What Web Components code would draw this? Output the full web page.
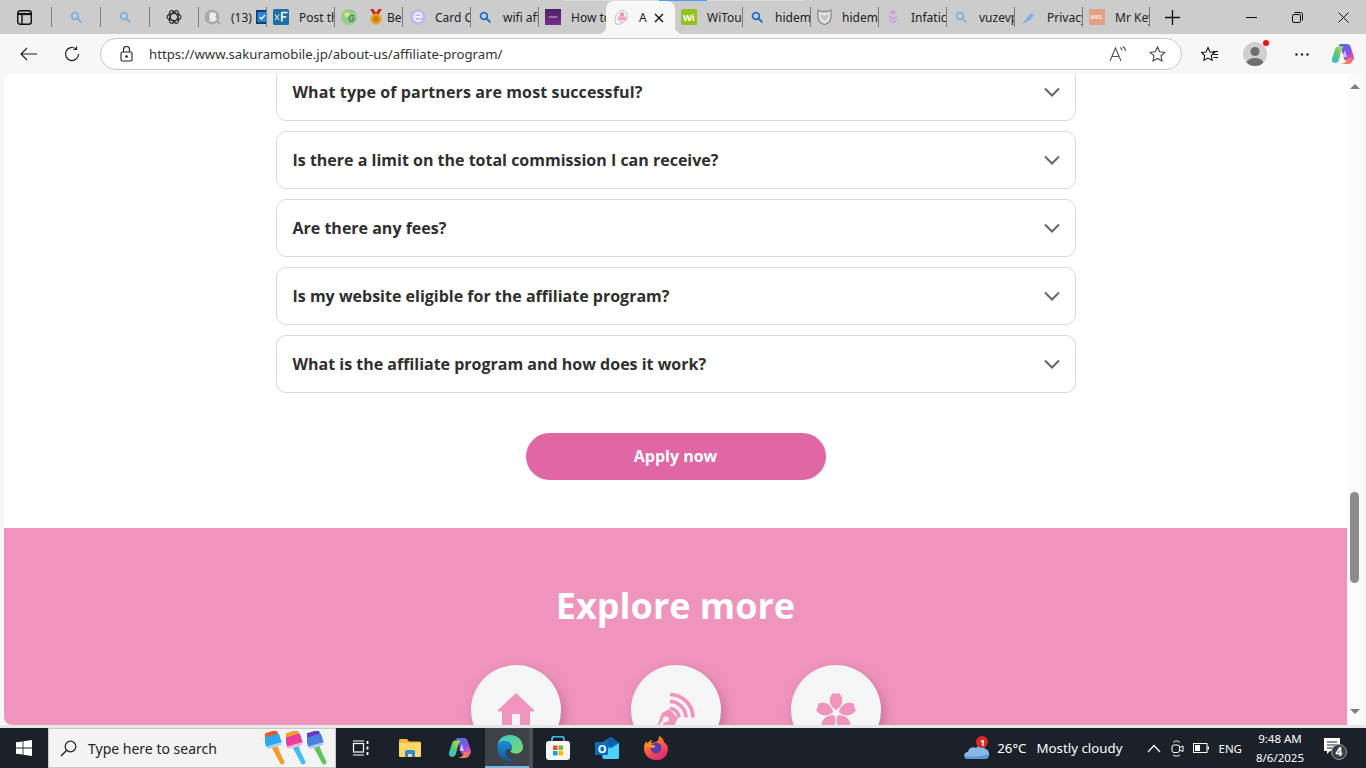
<!DOCTYPE html>
<html lang="en"><head><meta charset="utf-8"><title>Affiliate program</title>
<style>
html,body{margin:0;padding:0;height:768px;overflow:hidden;background:#f7f7f7}
body{font-family:"Open Sans","Noto Sans",sans-serif}
</style></head><body>
<browser-window>
  <tab-strip slot="tabs"></tab-strip>
  <nav-toolbar slot="toolbar"></nav-toolbar>
  <page-view slot="page">
    <faq-item style="letter-spacing:.12px">What type of partners are most successful?</faq-item>
    <faq-item>Is there a limit on the total commission I can receive?</faq-item>
    <faq-item>Are there any fees?</faq-item>
    <faq-item>Is my website eligible for the affiliate program?</faq-item>
    <faq-item>What is the affiliate program and how does it work?</faq-item>
    <apply-button>Apply now</apply-button>
    <explore-band slot="band">Explore more</explore-band>
  </page-view>
  <task-bar slot="taskbar"></task-bar>
</browser-window>
<script>
const mag=c=>`<svg width="16" height="16" viewBox="-2 -2 20 20"><circle cx="6.7" cy="6.7" r="4.200" fill="none" stroke="${c}" stroke-width="2.200"/><path d="M9.800 9.800l4.200 4.200" stroke="${c}" stroke-width="2.500" stroke-linecap="round"/></svg>`;
const brush=(a,b,c,d)=>`<svg width="21" height="35" viewBox="0 0 21 35"><g transform="rotate(-17 10 17)"><rect x="3" y="0" width="14" height="5" rx="1" fill="${a}"/><rect x="2" y="4" width="16" height="10" rx="1" fill="${b}"/><rect x="3" y="13" width="14" height="3" fill="${c}"/><path d="M7 16h6l.5 7 1.500 10c-.4 2.500-4 2.500-4.500 0L8.500 23z" fill="${d}"/></g></svg>`;
const PETAL='M20 18c-5-3-7-8-6-12 1-3 2-4 3-5l2 1 1-1 1 1 2-1c1 1 2 2 3 5 1 4-1 9-6 12z';
const COPILOT=`<svg width="22" height="22" viewBox="0 0 22 22"><defs><linearGradient id="c1" x1="0" y1="1" x2="1" y2="0"><stop offset="0" stop-color="#2fb5e8"/><stop offset=".55" stop-color="#5ecf6a"/><stop offset="1" stop-color="#f7d046"/></linearGradient><linearGradient id="c2" x1="0" y1="0" x2="1" y2="1"><stop offset="0" stop-color="#2a7de8"/><stop offset=".55" stop-color="#8d4fe6"/><stop offset="1" stop-color="#ee5f9c"/></linearGradient><linearGradient id="c3" x1="0" y1="0" x2="1" y2="0"><stop offset="0" stop-color="#f5a623"/><stop offset="1" stop-color="#ef5f8a"/></linearGradient></defs><path d="M9 1h6c2 0 3 1 3.500 2.500L22 14c.5 2-1 4-3 4h-4c-1.500 0-2.500-1-3-2.500L9 5C8.500 3.500 8 3 6.500 3 7 1.500 8 1 9 1z" fill="url(#c2)"/><path d="M6 3.500h5.500c-1.200 1.500-2 3.500-2.500 5.500l-2 7.500c-.5 2-2 3.500-4 3.500-2.500 0-3.500-2-3-4.500L3 6.500C3.500 4.800 4.500 3.500 6 3.500z" fill="url(#c1)"/><path d="M9 21h7c2.500 0 4-1.500 5-4 .5-1.500-.5-2.500-2-2.500h-1.500c-1.500 0-2 .8-2.500 2-.7 2.200-2.500 3.800-6 4.500z" fill="url(#c3)"/><path d="M13 7l2 7h-3.500c-1 0-1.200-.8-1-1.500z" fill="#f6e6f5" opacity=".7"/></svg>`;
const ICONS={
 search1:mag('#7fb0d9'),
 search2:mag('#1a73c8'),
 gpt:`<svg width="16" height="16" viewBox="0 0 16 16" fill="none" stroke="#2a2a2a" stroke-width="1.100"><ellipse cx="8" cy="8" rx="7" ry="3.600"/><ellipse cx="8" cy="8" rx="7" ry="3.600" transform="rotate(60 8 8)"/><ellipse cx="8" cy="8" rx="7" ry="3.600" transform="rotate(120 8 8)"/></svg>`,
 b:`<svg width="17" height="16" viewBox="0 0 17 16"><circle cx="8" cy="8" r="7.500" fill="#a9a9a9"/><path d="M13 12l3 3" stroke="#a9a9a9" stroke-width="2"/><path d="M5.500 3.500h3.800c2 0 2.900 1 2.900 2.200 0 1-.6 1.700-1.400 2 1.100.3 1.800 1.100 1.800 2.300 0 1.600-1.200 2.500-3.200 2.500H5.500z" fill="#ececec"/></svg>`,
 todo:`<svg width="11" height="14" viewBox="0 0 11 14"><rect width="11" height="14" fill="#143a6b"/><rect x="1.500" y="2" width="9" height="10" fill="#1f86e6"/><path d="M3.500 7l2 2 3.500-4" fill="none" stroke="#fff" stroke-width="1.300"/></svg>`,
 xf:`<svg width="16" height="16" viewBox="0 0 16 16"><rect width="16" height="16" rx="1.500" fill="#1d6fa5"/><path d="M2 5.500l4 5.500M6 5.500l-4 5.500" stroke="#cfe6f6" stroke-width="1.200"/><path d="M8.500 3.500h6M8.800 3.500v9M8.800 8h4.500" stroke="#fff" stroke-width="1.700" fill="none"/></svg>`,
 g:`<svg width="16" height="16" viewBox="0 0 16 16"><circle cx="8" cy="8" r="8" fill="#8ed08e"/><circle cx="6" cy="5.500" r="2.500" fill="#e6e08a"/><path d="M13 7.500c-1-1.500-4.500-1.500-5 1.500s3.500 4.500 5 2V9.500h-2.500" fill="none" stroke="#5b7a5b" stroke-width="1.300"/></svg>`,
 medal:`<svg width="14" height="16" viewBox="0 0 14 16"><path d="M1 0l5 8h2l5-8H9.500L7 4 4.500 0z" fill="#c9281f"/><circle cx="7" cy="10" r="5.500" fill="#e8a21d"/><circle cx="7" cy="10" r="3" fill="#c77f10"/></svg>`,
 e:`<svg width="16" height="16" viewBox="0 0 16 16"><circle cx="8" cy="8" r="8" fill="#c3b8ec"/><path d="M4.300 8h7.200c0-2.300-1.500-4-3.600-4S4.200 5.800 4.200 8s1.600 4 3.900 4c1.400 0 2.400-.5 3.200-1.500" fill="none" stroke="#f3f0fb" stroke-width="1.800"/></svg>`,
 purple:`<svg width="16" height="16" viewBox="0 0 16 16"><defs><linearGradient id="p" x1="0" y1="0" x2="0" y2="1"><stop offset="0" stop-color="#4a2264"/><stop offset="1" stop-color="#772e8f"/></linearGradient></defs><rect width="16" height="16" fill="url(#p)"/><rect x="3.500" y="7.500" width="9" height="1" fill="#cdb6d8"/></svg>`,
 sakura:`<svg width="16" height="18" viewBox="0 0 16 18" fill="none"><path d="M3 15C.5 10 3 3 9 1.500c4 0 6 4 5 8-1 3-6 7-11 5.500z" stroke="#999" stroke-width=".9" stroke-dasharray="1.500 1"/><circle cx="9" cy="5.500" r="2.300" fill="#ef94bd"/><circle cx="7" cy="9.500" r="2.400" fill="#f2a9cb"/><circle cx="11" cy="9.500" r="2" fill="#ef94bd"/><circle cx="8" cy="13" r="1.500" fill="#f6c3da"/></svg>`,
 wi:`<svg width="16" height="16" viewBox="0 0 16 16"><rect width="16" height="16" rx="1.500" fill="#95c11f"/><text x="1.700" y="12" font-family="Open Sans" font-weight="700" font-size="9.500" fill="#fff">Wi</text></svg>`,
 shield:`<svg width="15" height="16" viewBox="0 0 15 16"><path d="M1 1l3 1.500h7L14 1v7c0 4-3 6.500-6.500 7.500C4 14.500 1 12 1 8z" fill="#e4e4e4" stroke="#8b8b8b" stroke-width="1.300"/><path d="M4 5l3.500 2L11 5v4L7.500 12 4 9z" fill="#c4c4c4"/></svg>`,
 layers:`<svg width="16" height="16" viewBox="0 0 16 16"><path d="M4 3.200L8 .5l4 2.700L8 6z" fill="#dd9fd6"/><path d="M4 6.500L8 9l4-2.500v1.800L8 11 4 8.300z" fill="#c59be0"/><path d="M4 9.700l4 2.500 4-2.500v1.800l-4 2.700-4-2.700z" fill="#b9a6e8"/><path d="M5 13l3 2 3-2v1l-3 2-3-2z" fill="#c7bcef"/></svg>`,
 bird:`<svg width="16" height="16" viewBox="0 0 16 16"><path d="M1 15l4-5 5-6 2.500 2-3 5-4 2z" fill="#86aee8"/><path d="M10 1.500l1.500 1M12.500 3.500l1.500 1M13 1l1 1" stroke="#a9c6ef" stroke-width="1.200"/></svg>`,
 mks:`<svg width="16" height="16" viewBox="0 0 16 16"><rect width="16" height="16" fill="#e0a286"/><text x="1" y="10" font-family="Open Sans" font-weight="700" font-size="5.500" fill="#f7e6dc">MKS</text></svg>`,
 house:`<svg width="38" height="44" viewBox="0 0 38 44"><path d="M19 1L37 18c.6.800 0 1.500-1 1.500h-3V44H5V19.500H2c-1 0-1.600-.7-1-1.500z" fill="#ef94bd"/><rect x="15" y="22" width="8" height="22" fill="#f5f5f5"/></svg>`,
 pen:`<svg width="40" height="44" viewBox="0 0 40 44" fill="none"><g stroke="#ef94bd" stroke-width="3.600"><path d="M14 2.500c12 0 23 10 23 23"/><path d="M14 9.500c8.500 0 16 7.500 16 16"/><path d="M14 16.500c4.500 0 9 4.500 9 9"/></g><path d="M13 17l9 9-4 8-16 7-2-2 9-9a3 3 0 1 0-2-2L0 37 6 21z" fill="#ef94bd"/></svg>`,
 flower:`<svg width="40" height="44" viewBox="0 0 40 44" fill="#ef94bd"><path d="${PETAL}"/><path d="${PETAL}" transform="rotate(72 20 21)"/><path d="${PETAL}" transform="rotate(144 20 21)"/><path d="${PETAL}" transform="rotate(216 20 21)"/><path d="${PETAL}" transform="rotate(288 20 21)"/></svg>`,
 win:`<svg width="16" height="16" viewBox="0 0 16 16" fill="#fff"><path d="M0 2.300l6.600-.9v6.200H0zM7.400 1.300L16 0v7.600H7.400zM0 8.400h6.600v6.200L0 13.700zM7.400 8.400H16V16l-8.600-1.200z"/></svg>`,
 lens:`<svg width="17" height="17" viewBox="0 0 17 17" fill="none" stroke="#222" stroke-width="1.200"><circle cx="10.500" cy="6.500" r="5.300"/><path d="M6.500 10.500L1 16" stroke-width="1.500"/></svg>`,
 taskview:`<svg width="18" height="16" viewBox="0 0 18 16" fill="none" stroke="#fff" stroke-width="1.200"><rect x="1.500" y="3.500" width="10" height="8.500"/><path d="M1 1h11M1 15h11"/><path d="M15.500 1v3M15.500 6.500v3M15.500 12v3" stroke-width="1.800"/></svg>`,
 folder:`<svg width="22" height="18" viewBox="0 0 22 18"><path d="M0 1.500C0 .7.700 0 1.500 0H8l2 2.500h10.500c.8 0 1.500.7 1.500 1.500v12.500c0 .8-.7 1.500-1.500 1.500h-19C.7 18 0 17.300 0 16.500z" fill="#f2b938"/><path d="M0 4h22v12.500c0 .8-.7 1.500-1.500 1.500h-19C.7 18 0 17.300 0 16.500z" fill="#fcd76a"/><path d="M6 18v-5c0-1 .7-2 2-2h6c1.300 0 2 1 2 2v5h-3v-3H9v3z" fill="#2f88d4"/></svg>`,
 copilot:COPILOT,
 edge:`<svg width="26" height="26" viewBox="0 0 26 26"><defs><linearGradient id="e1" x1="0" y1="0" x2="1" y2="1"><stop offset="0" stop-color="#37c6d0"/><stop offset="1" stop-color="#7fdc6a"/></linearGradient><linearGradient id="e2" x1="0" y1="0" x2="0" y2="1"><stop offset="0" stop-color="#1d8fd6"/><stop offset="1" stop-color="#0c59a4"/></linearGradient></defs><path d="M13 0c7.500 0 13 5.500 13 12 0 4-3 6.500-7 6.500-3 0-5.500-1-5.500-2.500 0-.8 1.500-1 1.500-3.500 0-3.500-3.500-6.500-7.500-6.500C4 6 1.500 8 .5 10 1.500 4 6.500 0 13 0z" fill="url(#e1)"/><path d="M.5 10C2 7.500 4.500 6 7.500 6c4 0 7.500 3 7.500 6.500 0 1-.5 1.500-1 2-2.500-1-5-.5-5.500 2.500-.5 4 4 8.500 9.500 7.500-1.500.8-3.200 1.500-5 1.500C5.500 26 0 20 .5 10z" fill="url(#e2)"/></svg>`,
 store:`<svg width="24" height="24" viewBox="0 0 24 24"><path d="M6 6V3c0-1.500 1-2.500 2.500-2.500h7C17 .5 18 1.500 18 3v3" fill="none" stroke="#3fb6ea" stroke-width="1.800"/><rect y="5" width="24" height="19" rx="3" fill="#f6f6f6"/><rect x="7" y="9.500" width="4.500" height="4.500" fill="#e8542a"/><rect x="12.500" y="9.500" width="4.500" height="4.500" fill="#7cb82f"/><rect x="7" y="15" width="4.500" height="4.500" fill="#18a0ee"/><rect x="12.500" y="15" width="4.500" height="4.500" fill="#ffb900"/></svg>`,
 outlook:`<svg width="24" height="22" viewBox="0 0 24 22"><path d="M8 5l8-5 8 6v14c0 1-.8 2-2 2H9c-1 0-2-1-2-2z" fill="#28a8ea"/><path d="M24 6L8 15v5c0 1 1 2 2 2h12c1.200 0 2-1 2-2z" fill="#50d9ff" opacity=".85"/><path d="M16 0l8 6-8 5-8-5z" fill="#0a5fb0"/><rect y="5" width="13" height="13" rx="1" fill="#0f6cbd"/><text x="2.700" y="15.500" font-family="Open Sans" font-weight="700" font-size="11" fill="#fff">O</text></svg>`,
 firefox:`<svg width="24" height="24" viewBox="0 0 24 24"><defs><linearGradient id="f1" x1="0" y1="0" x2=".6" y2="1"><stop offset="0" stop-color="#ffcc33"/><stop offset=".45" stop-color="#ff6a2b"/><stop offset="1" stop-color="#e0267a"/></linearGradient></defs><path d="M12 24C5 24 0 19 0 12c0-3 1-5 2.500-7 0 1 .5 2 1 2.500C5 5 7 4 8.500 4c-1 1-1.500 2-1.500 3 2-.5 5-.5 7-2.500.8-1.500 1-3 1-4.500 4 2 5 4.500 5 6 2.500 2 4 3.500 4 6.500 0 7-5 12-12 12z" fill="url(#f1)"/><circle cx="12" cy="12" r="5.500" fill="#5b3bb5"/><path d="M3 9h7l1.500 2c-2 1.500-5 1-8.500-2z" fill="#ff9a2e"/></svg>`,
 cloud:`<svg width="26" height="26" viewBox="0 0 26 26"><path d="M4 24c-5 0-5-7 0-7 .5-4 5-6 8-4 2-3 8-3 9 1 5 0 6 10 0 10z" fill="#8ab8e8"/><path d="M4 24c-3 0-4-2-3.500-3.500C6 22 16 22 24 19c1 2 0 5-3 5z" fill="#5f97d6"/><circle cx="18" cy="7" r="6" fill="#d92b22"/><text x="15.900" y="10.500" font-family="Open Sans" font-weight="700" font-size="9" fill="#fff">1</text></svg>`,
 chevup:`<svg width="14" height="9" viewBox="0 0 14 9" fill="none" stroke="#fff" stroke-width="1.200"><path d="M1 8l6-6.500L13 8"/></svg>`,
 meet:`<svg width="13" height="17" viewBox="0 0 13 17" fill="none" stroke="#fff" stroke-width="1"><rect x="1" y="5" width="7.500" height="7.500" rx="2"/><path d="M8.500 7.500L12 6v5.500l-3.500-1.500M2 2.500c2-2 5-2 7 0M2 15c2 1.500 5 1.500 7 0"/></svg>`,
 batt:`<svg width="16" height="10" viewBox="0 0 16 10" fill="none"><rect x=".5" y=".5" width="13.500" height="9" stroke="#fff"/><rect x="2" y="2" width="5" height="6" fill="#fff"/><rect x="14.500" y="3.500" width="1.500" height="3" fill="#fff"/></svg>`,
 notif:`<svg width="26" height="26" viewBox="0 0 26 26"><path d="M1 3h16v13H7l-3 3v-3H1z" fill="#fff"/><path d="M4 7h10M4 10h10M4 13h10" stroke="#222" stroke-width="1"/><circle cx="16" cy="17" r="7.500" fill="#3a3f46" stroke="#999" stroke-width="1"/></svg>`,
};
class Base extends HTMLElement{
  constructor(){super();this.attachShadow({mode:'open'})}
  connectedCallback(){this.shadowRoot.innerHTML=this.render()}
}
customElements.define('x-icon',class extends Base{
  render(){return `<style>:host{display:inline-flex;flex:none;align-items:center;justify-content:center}svg{display:block}</style>${ICONS[this.getAttribute('name')]}`}
});
customElements.define('browser-window',class extends Base{
  render(){return `<style>:host{display:flex;flex-direction:column;height:768px;width:1366px;background:#f7f7f7}
  .gap{height:3px;flex:none;background:#e6e6e6}</style>
  <slot name="tabs"></slot><slot name="toolbar"></slot><slot name="page"></slot><div class="gap"></div><slot name="taskbar"></slot>`}
});
customElements.define('browser-tab',class extends Base{
  render(){const w=this.getAttribute('w'),ic=(this.getAttribute('icons')||'').split(' ').filter(Boolean);
    const gap=this.getAttribute('gap')||10,pad=this.getAttribute('pad')||6,t=this.getAttribute('text')||'';
    const end=this.getAttribute('end');
    return `<style>:host{display:flex;flex:none;width:${w}px;height:34px;position:relative;align-items:center;box-sizing:border-box;padding-left:${pad}px;color:#222;font:12px "Noto Sans","Open Sans",sans-serif}
    :host([sep])::after{content:"";position:absolute;right:0;top:7px;height:20px;width:1px;background:#7c7c7c}
    .i{display:flex;align-items:center;gap:${this.getAttribute('igap')||12}px;flex:none}
    .t{margin-left:${gap}px;white-space:nowrap;overflow:hidden;flex:1;min-width:0}
    .e{position:absolute;right:0;top:10px}
    </style><span class="i">${ic.map(n=>`<x-icon name="${n}"></x-icon>`).join('')}</span>${t?`<span class="t">${t}</span>`:''}${end?`<x-icon class="e" name="${end}"></x-icon>`:''}`}
});
customElements.define('active-tab',class extends Base{
  render(){return `<style>:host{display:flex;flex:none;width:69px;height:33px;margin-top:1px;background:#f7f7f7;border-radius:8px 8px 0 0;position:relative;align-items:center;box-sizing:border-box;padding-left:7px;color:#222;font:12px "Noto Sans","Open Sans",sans-serif}
  :host::before,:host::after{content:"";position:absolute;bottom:0;width:8px;height:8px}
  :host::before{left:-8px;background:radial-gradient(circle at 0 0,transparent 8px,#f7f7f7 8.500px)}
  :host::after{right:-8px;background:radial-gradient(circle at 100% 0,transparent 8px,#f7f7f7 8.500px)}
  .t{margin-left:10px;width:14px;overflow:hidden}
  svg{margin-left:1px;display:block}</style>
  <x-icon name="sakura"></x-icon><span class="t">A</span><svg width="10" height="10" viewBox="0 0 10 10" stroke="#111" stroke-width="1.400"><path d="M1 1l8 8M9 1l-8 8"/></svg>`}
});
customElements.define('tab-strip',class extends Base{
  render(){return `<style>:host{display:flex;flex:none;height:34px;background:#cccccc;position:relative;align-items:flex-start;color:#222}
  .menu{width:52px;height:34px;flex:none;display:flex;align-items:center;box-sizing:border-box;padding-left:17px;position:relative}
  .menu::after{content:"";position:absolute;right:0;top:7px;height:20px;width:1px;background:#7c7c7c}
  .top{position:absolute;top:0;left:563px;width:240px;height:1px;background:#dcdcdc}
  .top i{display:block;margin-left:96px;width:48px;height:1px;background:#4a9fea}
  .plus{flex:none;width:45px;display:flex;justify-content:center;align-items:center;height:34px}
  .ctl{margin-left:33px;display:flex}
  .ctl span{width:46px;height:34px;display:flex;align-items:center;justify-content:center}
  </style><div class="top"><i></i></div>
  <div class="menu"><svg width="15" height="15" viewBox="0 0 15 15" fill="none" stroke="#111" stroke-width="1.400"><rect x=".7" y=".7" width="13.600" height="13.600" rx="2.500"/><path d="M.7 4h13.600" stroke-width="2.200"/><path d="M5 4v10"/></svg></div>
  <browser-tab w="49" sep pad="16" icons="search1"></browser-tab>
  <browser-tab w="49" sep pad="16" icons="search1"></browser-tab>
  <browser-tab w="49" sep pad="16" icons="gpt"></browser-tab>
  <browser-tab w="68" sep pad="5" gap="10" icons="b" text="(13)" end="todo"></browser-tab>
  <browser-tab w="68" sep icons="xf" text="Post th"></browser-tab>
  <browser-tab w="68" sep icons="g medal" igap="12" gap="4" text="Be"></browser-tab>
  <browser-tab w="68" sep pad="7" icons="e" gap="9" text="Card C"></browser-tab>
  <browser-tab w="68" sep icons="search2" text="wifi aff"></browser-tab>
  <browser-tab w="67" pad="6" icons="purple" text="How to"></browser-tab>
  <active-tab></active-tab>
  <browser-tab w="68" sep pad="6" icons="wi" text="WiTou"></browser-tab>
  <browser-tab w="68" sep icons="search2" text="hidem"></browser-tab>
  <browser-tab w="68" sep icons="shield" text="hidem"></browser-tab>
  <browser-tab w="68" sep icons="layers" text="Infatic"></browser-tab>
  <browser-tab w="68" sep icons="search1" text="vuzevp"></browser-tab>
  <browser-tab w="68" sep icons="bird" text="Privacy"></browser-tab>
  <browser-tab w="67" sep icons="mks" text="Mr Key"></browser-tab>
  <span class="plus"><svg width="15" height="15" viewBox="0 0 15 15" stroke="#111" stroke-width="1.300"><path d="M7.500 0v15M0 7.500h15"/></svg></span>
  <div class="ctl">
   <span><svg width="11" height="1" viewBox="0 0 11 1"><path d="M0 .5h11" stroke="#111"/></svg></span>
   <span><svg width="11" height="11" viewBox="0 0 11 11" fill="none" stroke="#111"><rect x=".5" y="2.500" width="8" height="8" rx="1.500"/><path d="M2.500.5h6a2 2 0 0 1 2 2v6"/></svg></span>
   <span><svg width="11" height="11" viewBox="0 0 11 11" stroke="#111"><path d="M.5.500l10 10M10.500.500l-10 10"/></svg></span>
  </div>`}
});
customElements.define('nav-toolbar',class extends Base{
  render(){return `<style>:host{display:flex;flex:none;height:40px;background:#f7f7f7;align-items:center;box-sizing:border-box;padding:0 0 0 20px;position:relative}
  .b{display:flex;flex:none;justify-content:center;align-items:center}
  .addr{width:1082px;height:32px;box-sizing:border-box;background:#fff;border:1px solid #c8c8c8;border-radius:16px;display:flex;align-items:center;padding-left:19px;flex:none}
  .url{margin-left:16px;font:13.200px "Noto Sans","Open Sans",sans-serif;color:#333;flex:1;white-space:nowrap}
  .av{display:block;border-radius:50%}
  .wrap{position:relative;display:block}
  .dot{position:absolute;right:-2px;top:-2px;width:6px;height:6px;border-radius:50%;background:#e11;}
  </style>
  <span class="b"><svg width="18" height="14" viewBox="0 0 18 14" fill="none" stroke="#222" stroke-width="1.200"><path d="M17 7H1M7 1L1 7l6 6"/></svg></span>
  <span class="b" style="margin-left:26px"><svg width="16" height="16" viewBox="0 0 16 16" fill="none" stroke="#222" stroke-width="1.200"><path d="M14.500 8A6.500 6.500 0 1 1 12 2.900"/><path d="M12.500.500v3h-3" /></svg></span>
  <div class="addr" style="margin-left:20px">
   <svg width="13" height="16" viewBox="0 0 13 16" fill="none" stroke="#222" stroke-width="1.100"><rect x="1" y="6" width="11" height="9" rx="1.500"/><path d="M3.500 6V3.500a3 3 0 0 1 6 0V6"/><circle cx="6.500" cy="10.500" r=".8" fill="#222"/></svg>
   <span class="url">https://www.sakuramobile.jp/about-us/affiliate-program/</span>
   <span class="b" style="margin-right:22px"><svg width="18" height="16" viewBox="0 0 18 16" fill="none" stroke="#555" stroke-width="1.100"><path d="M1 15L6.500 2 12 15M3 10.500h7"/><path d="M11 1.500c1.500 .5 2 1.500 2 3M13.500.500c2 1 3 2.500 3 4.500"/></svg></span>
   <span class="b" style="margin-right:15px"><svg width="17" height="16" viewBox="0 0 17 16" fill="none" stroke="#444" stroke-width="1.100"><path d="M8.500 1l2.200 4.700 5.100.6-3.800 3.500 1 5.100-4.500-2.500-4.500 2.500 1-5.100L1.200 6.300l5.100-.6z"/></svg></span>
  </div>
  <span class="b" style="margin-left:19px"><svg width="18" height="16" viewBox="0 0 18 16" fill="none" stroke="#111" stroke-width="1.100"><path d="M7 1.500L9 6l4.500.5-3.200 3 .8 4.700L7 12l-4.100 2.200.8-4.700-3.200-3L5 6z"/><path d="M12 5.500h5M12.500 8.500h4.500M12.500 11.500h4.500"/></svg></span>
  <span class="b wrap" style="margin-left:24px"><svg class="av" width="24" height="24" viewBox="0 0 24 24"><rect width="24" height="24" fill="#cfcfcf"/><circle cx="12" cy="9.500" r="4.500" fill="#6e6e6e"/><path d="M3 24c0-6 4-8 9-8s9 2 9 8z" fill="#6e6e6e"/></svg><span class="dot"></span></span>
  <span class="b" style="margin-left:28px"><svg width="14" height="3" viewBox="0 0 14 3" fill="#222"><circle cx="1.500" cy="1.500" r="1.200"/><circle cx="7" cy="1.500" r="1.200"/><circle cx="12.500" cy="1.500" r="1.200"/></svg></span>
  <x-icon name="copilot" style="margin-left:23px"></x-icon>`}
});
customElements.define('page-view',class extends Base{
  render(){return `<style>:host{display:flex;flex:none;height:651px;width:1358px;margin-left:4px;background:#fff;border-radius:8px;overflow:hidden}
  .scroll{width:1343px;flex:none;overflow:hidden;height:651px}
  .list{margin-top:-11px;display:flex;flex-direction:column;align-items:center;gap:10px}
  .cta{display:flex;justify-content:center;margin:40px 0 48px}
  .bar{flex:none;width:15px;background:#fbfbfb;display:flex;flex-direction:column;align-items:center;box-sizing:border-box;padding-top:10px;height:651px}
  .thumb{width:9px;height:91px;border-radius:5px;background:#8c8c8c;margin-top:403px}
  .up{width:0;height:0;border:5px solid transparent;border-top:0;border-bottom:5px solid #7d7d7d}
  .down{width:0;height:0;border:5px solid transparent;border-bottom:0;border-top:5px solid #7d7d7d;margin-top:126px}
  </style>
  <div class="scroll"><div class="list"><slot></slot></div><div class="cta"><slot name="cta"></slot></div><slot name="band"></slot></div>
  <div class="bar"><div class="up"></div><div class="thumb"></div><div class="down"></div></div>`}
  connectedCallback(){super.connectedCallback();const a=this.querySelector('apply-button');if(a)a.slot='cta'}
});
customElements.define('faq-item',class extends Base{
  render(){return `<style>:host{display:flex;box-sizing:border-box;width:800px;height:58px;border:1px solid #d9d9d9;border-radius:10px;background:#fff;align-items:center;justify-content:space-between;padding:0 15px 0 16px;font:700 16px "Open Sans",sans-serif;color:#2f2f2f}</style>
  <slot></slot><svg width="16" height="10" viewBox="0 0 16 10" fill="none" stroke="#666" stroke-width="2"><path d="M1 1.500l7 7 7-7"/></svg>`}
});
customElements.define('apply-button',class extends Base{
  render(){return `<style>:host{display:flex;width:300px;height:47px;box-sizing:border-box;padding-bottom:2px;border-radius:24px;background:#e066a4;color:#fff;align-items:center;justify-content:center;font:700 16px "Open Sans",sans-serif}</style><slot></slot>`}
});
customElements.define('explore-band',class extends Base{
  render(){return `<style>:host{display:block;background:#ef94bd;height:240px;box-sizing:border-box;padding-top:53px;color:#fff}
  h2{margin:0;font:700 36px/50px "Open Sans",sans-serif;text-align:center}
  .row{display:flex;justify-content:center;gap:70px;margin-top:34px}
  .c{width:90px;height:90px;border-radius:50%;background:#f5f5f5;box-shadow:3px 5px 12px rgba(120,50,90,.35);display:flex;justify-content:center;padding-top:27px;box-sizing:border-box}
  </style><h2><slot></slot></h2><div class="row">
  <div class="c"><x-icon name="house" style="align-items:flex-start"></x-icon></div>
  <div class="c"><x-icon name="pen" style="align-items:flex-start"></x-icon></div>
  <div class="c"><x-icon name="flower" style="align-items:flex-start"></x-icon></div></div>`}
});
customElements.define('task-bar',class extends Base{
  render(){return `<style>:host{display:flex;flex:none;height:40px;background:#1b2129;align-items:center;color:#fff;font:13px "Noto Sans","Open Sans",sans-serif;position:relative}
  .start{width:48px;display:flex;justify-content:center;flex:none}
  .search{width:288px;height:40px;box-sizing:border-box;flex:none;background:#f3f3f3;border:1px solid #c8c8c8;display:flex;align-items:center;padding-left:11px;color:#222;font-size:14px}
  .search span{margin-left:11px;flex:1;white-space:nowrap}
  .br{display:flex;margin-right:7px}
  .br svg{display:block}
  .app{height:40px;flex:none;display:flex;align-items:center;justify-content:center;box-sizing:border-box}
  .on{background:#3e434a;border-bottom:2px solid #76b9ed;position:relative;padding:2px 0 0 2px}
  .on::after{content:"";position:absolute;right:0;top:0;bottom:-2px;width:4px;background:#4a4f56}
  .sp{flex:1}
  .w{margin-left:7px;white-space:nowrap;font-size:13.300px}
  .clock{width:60px;text-align:center;line-height:19px;font-size:11.500px;flex:none;margin-left:8px}
  .n{position:relative;width:26px;height:26px;margin:0 17px 0 13px;flex:none}
  .n b{position:absolute;left:9px;top:9px;width:14px;text-align:center;font:700 12px/16px "Open Sans",sans-serif}
  </style>
  <div class="start"><x-icon name="win"></x-icon></div>
  <div class="search"><x-icon name="lens"></x-icon><span>Type here to search</span><div class="br">
    ${brush('#e25a2a','#2fa7ee','#9cd2f5','#f59b2e')}${brush('#f0a12a','#e8409a','#f7b3d6','#3fc0ee')}${brush('#6a35c2','#4a7fe0','#b3c5f5','#5ec65e')}</div></div>
  <div class="app" style="width:49px"><x-icon name="taskview"></x-icon></div>
  <div class="app" style="width:50px"><x-icon name="folder"></x-icon></div>
  <div class="app" style="width:50px"><x-icon name="copilot"></x-icon></div>
  <div class="app on" style="width:48px"><x-icon name="edge"></x-icon></div>
  <div class="app" style="width:49px"><x-icon name="store"></x-icon></div>
  <div class="app" style="width:50px"><x-icon name="outlook"></x-icon></div>
  <div class="app" style="width:48px"><x-icon name="firefox"></x-icon></div>
  <div class="sp"></div>
  <x-icon name="cloud"></x-icon><span class="w">26°C</span><span class="w" style="margin-left:10px">Mostly cloudy</span>
  <x-icon name="chevup" style="margin-left:25px"></x-icon>
  <x-icon name="meet" style="margin-left:10px"></x-icon>
  <x-icon name="batt" style="margin-left:9px"></x-icon>
  <span style="margin-left:9px;font-size:11.500px">ENG</span>
  <div class="clock">9:48 AM<br>8/6/2025</div>
  <div class="n"><x-icon name="notif"></x-icon><b>4</b></div>`}
});
</script>
</body></html>
